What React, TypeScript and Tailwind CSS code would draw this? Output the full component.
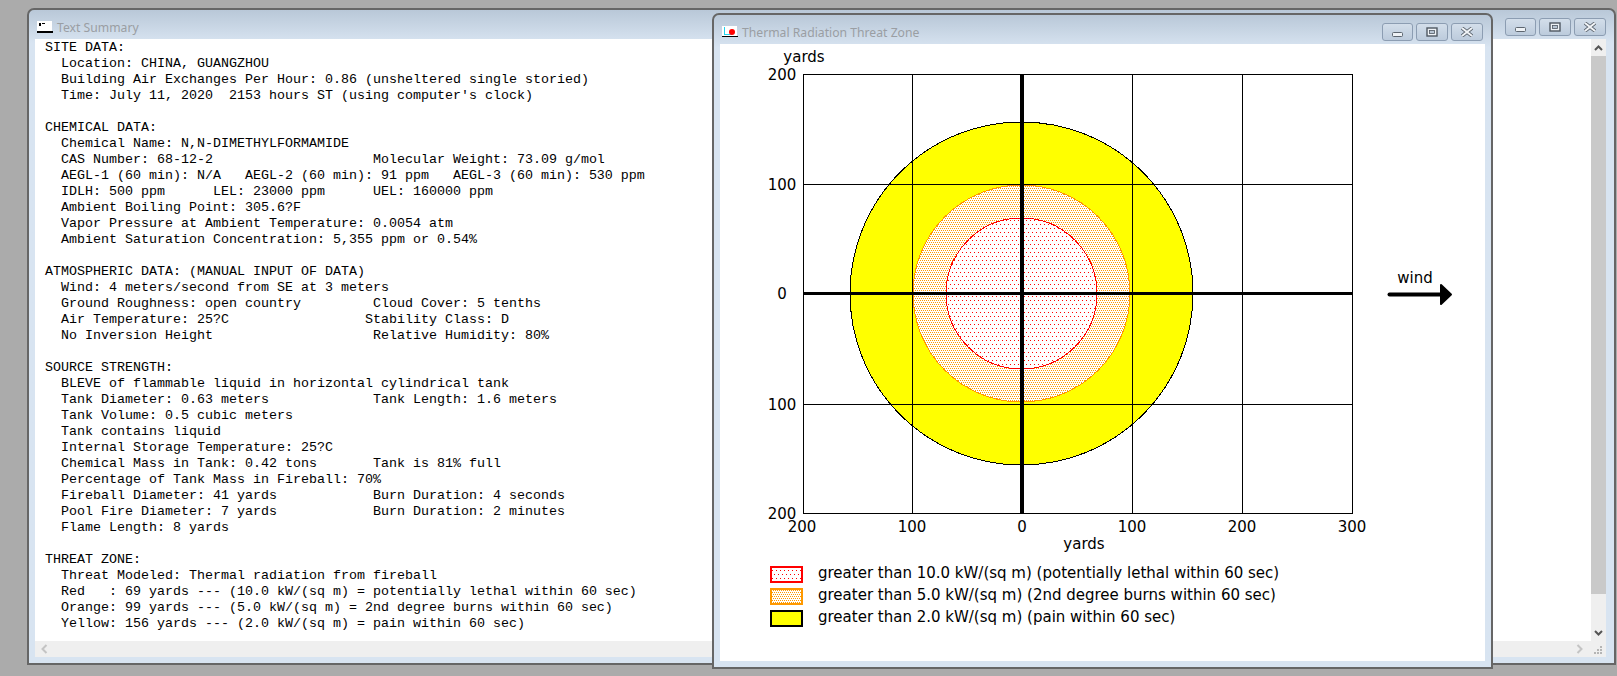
const SUMMARY = `SITE DATA:
  Location: CHINA, GUANGZHOU
  Building Air Exchanges Per Hour: 0.86 (unsheltered single storied)
  Time: July 11, 2020  2153 hours ST (using computer's clock)

CHEMICAL DATA:
  Chemical Name: N,N-DIMETHYLFORMAMIDE
  CAS Number: 68-12-2                    Molecular Weight: 73.09 g/mol
  AEGL-1 (60 min): N/A   AEGL-2 (60 min): 91 ppm   AEGL-3 (60 min): 530 ppm
  IDLH: 500 ppm      LEL: 23000 ppm      UEL: 160000 ppm
  Ambient Boiling Point: 305.6?F
  Vapor Pressure at Ambient Temperature: 0.0054 atm
  Ambient Saturation Concentration: 5,355 ppm or 0.54%

ATMOSPHERIC DATA: (MANUAL INPUT OF DATA)
  Wind: 4 meters/second from SE at 3 meters
  Ground Roughness: open country         Cloud Cover: 5 tenths
  Air Temperature: 25?C                 Stability Class: D
  No Inversion Height                    Relative Humidity: 80%

SOURCE STRENGTH:
  BLEVE of flammable liquid in horizontal cylindrical tank
  Tank Diameter: 0.63 meters             Tank Length: 1.6 meters
  Tank Volume: 0.5 cubic meters
  Tank contains liquid
  Internal Storage Temperature: 25?C
  Chemical Mass in Tank: 0.42 tons       Tank is 81% full
  Percentage of Tank Mass in Fireball: 70%
  Fireball Diameter: 41 yards            Burn Duration: 4 seconds
  Pool Fire Diameter: 7 yards            Burn Duration: 2 minutes
  Flame Length: 8 yards

THREAT ZONE:
  Threat Modeled: Thermal radiation from fireball
  Red   : 69 yards --- (10.0 kW/(sq m) = potentially lethal within 60 sec)
  Orange: 99 yards --- (5.0 kW/(sq m) = 2nd degree burns within 60 sec)
  Yellow: 156 yards --- (2.0 kW/(sq m) = pain within 60 sec)`;

const CX = 1021.5;
const CY = 293.5;
const GRID_X = [803, 912.5, 1132.5, 1242.5, 1352];
const GRID_Y = [74.5, 184.5, 404.5, 513.5];

function WindowButtons() {
  return (
    <div className="flex gap-[3px]">
      <button className="flex h-[18px] w-[31px] items-center justify-center rounded-[3px] border border-[#8c9db2] bg-gradient-to-b from-[#d3deea] to-[#bccbdc]">
        <svg width="12" height="6" className="mt-[5px]">
          <rect x="0.5" y="0.5" width="10" height="4" rx="1" fill="#eef2f6" stroke="#5d6670" />
        </svg>
      </button>
      <button className="flex h-[18px] w-[32px] items-center justify-center rounded-[3px] border border-[#8c9db2] bg-gradient-to-b from-[#d3deea] to-[#bccbdc]">
        <svg width="12" height="10">
          <rect x="1" y="1" width="10" height="8" fill="#eef2f6" stroke="#4f5862" strokeWidth="1.4" />
          <rect x="3.5" y="3.5" width="5" height="3" fill="#b9c6d4" stroke="#4f5862" strokeWidth="0.8" />
        </svg>
      </button>
      <button className="flex h-[18px] w-[32px] items-center justify-center rounded-[3px] border border-[#8c9db2] bg-gradient-to-b from-[#d3deea] to-[#bccbdc]">
        <svg width="14" height="10" viewBox="0 0 14 10">
          <path d="M2 1 L12 9 M12 1 L2 9" stroke="#59626c" strokeWidth="3.6" />
          <path d="M2 1 L12 9 M12 1 L2 9" stroke="#f1f4f7" strokeWidth="2" />
        </svg>
      </button>
    </div>
  );
}

function TitleBar({ title, icon }: { title: string; icon: React.ReactNode }) {
  return (
    <div className="flex h-[29px] items-start">
      <div className="mt-[11px] ml-[8px] flex h-[12px] w-[16px]">{icon}</div>
      <span className="mt-[9px] ml-[4px] flex-1 font-['Noto_Sans',sans-serif] text-[12.2px] leading-[18px] text-[#9a9ea3]">
        {title}
      </span>
      <div className="mt-[8px] mr-[8px]">
        <WindowButtons />
      </div>
    </div>
  );
}

function TextSummaryWindow() {
  return (
    <div className="absolute top-[8px] left-[27px] flex h-[657px] w-[1589px] flex-col rounded-t-[7px] border-2 border-[#666666] bg-gradient-to-b from-[#b9c8d8] via-[#d8e4f1] via-[5%] to-[#d8e4f1]">
      <TitleBar
        title="Text Summary"
        icon={
          <svg width="16" height="12">
            <rect width="15" height="11" fill="#fff" />
            <rect y="10" width="16" height="2" fill="#000" />
            <rect x="2" y="2" width="2" height="3" fill="#000" />
            <rect x="5" y="2" width="3" height="1" fill="#000" />
          </svg>
        }
      />
      <div className="mr-[8px] mb-[6px] ml-[6px] flex flex-1 flex-col overflow-hidden bg-white">
        <div className="flex flex-1 overflow-hidden">
          <pre className="flex-1 pt-px pl-[10px] font-['Liberation_Mono',monospace] text-[13.33px] leading-[16px] text-black">
            {SUMMARY}
          </pre>
          {/* vertical scrollbar */}
          <div className="flex w-[15px] flex-col bg-[#efefef]">
            <div className="flex h-[17px] items-center justify-center">
              <svg width="9" height="6">
                <path d="M1 5 L4.5 1.5 L8 5" fill="none" stroke="#555" strokeWidth="2" />
              </svg>
            </div>
            <div className="h-[538px] bg-[#c9c9c9]" />
            <div className="mt-auto flex h-[17px] items-center justify-center">
              <svg width="9" height="6">
                <path d="M1 1 L4.5 4.5 L8 1" fill="none" stroke="#555" strokeWidth="2" />
              </svg>
            </div>
          </div>
        </div>
        {/* horizontal scrollbar */}
        <div className="flex h-[16px] items-center justify-between bg-[#efefef] pr-[3px] pl-[6px]">
          <svg width="7" height="10">
            <path d="M5.5 1 L1.5 5 L5.5 9" fill="none" stroke="#c4c4c4" strokeWidth="2" />
          </svg>
          <div className="flex items-center gap-[11px]">
            <svg width="7" height="10">
              <path d="M1.5 1 L5.5 5 L1.5 9" fill="none" stroke="#c4c4c4" strokeWidth="2" />
            </svg>
            <svg width="9" height="9" className="mt-[2px]">
              <rect x="6" width="2" height="2" fill="#b5b5b5" />
              <rect x="3" y="3" width="2" height="2" fill="#b5b5b5" />
              <rect x="6" y="3" width="2" height="2" fill="#b5b5b5" />
              <rect y="6" width="2" height="2" fill="#b5b5b5" />
              <rect x="3" y="6" width="2" height="2" fill="#b5b5b5" />
              <rect x="6" y="6" width="2" height="2" fill="#b5b5b5" />
            </svg>
          </div>
        </div>
      </div>
    </div>
  );
}

function ThreatChart() {
  return (
    <svg
      width="765"
      height="512"
      viewBox="720 44 765 512"
      className="block font-['DejaVu_Sans',sans-serif] text-[15px]"
      shapeRendering="crispEdges"
    >
      <defs>
        <pattern id="red-dots" width="4" height="8" patternUnits="userSpaceOnUse">
          <rect width="4" height="8" fill="#fff" />
          <rect x="0" y="0" width="1" height="1" fill="#f00" />
          <rect x="2" y="4" width="1" height="1" fill="#f00" />
        </pattern>
        <pattern id="orange-dots" width="4" height="4" patternUnits="userSpaceOnUse">
          <rect width="4" height="4" fill="#fff" />
          <rect x="0" y="0" width="1" height="1" fill="#ff9900" />
          <rect x="2" y="0" width="1" height="1" fill="#ff9900" />
          <rect x="1" y="2" width="1" height="1" fill="#ff9900" />
          <rect x="3" y="2" width="1" height="1" fill="#ff9900" />
        </pattern>
      </defs>

      <rect x="803" y="74.5" width="549" height="439" fill="#fff" />
      <circle cx={CX} cy={CY} r="171.5" fill="#ffff00" stroke="#000" />
      <circle cx={CX} cy={CY} r="108.5" fill="url(#orange-dots)" stroke="#ff9900" />
      <circle cx={CX} cy={CY} r="75.5" fill="url(#red-dots)" stroke="#f00" />

      <rect x="803" y="74.5" width="549" height="439" fill="none" stroke="#000" />
      {GRID_X.map((x) => (
        <line key={x} x1={x} x2={x} y1="74.5" y2="513.5" stroke="#000" />
      ))}
      {GRID_Y.map((y) => (
        <line key={y} x1="803" x2="1352" y1={y} y2={y} stroke="#000" />
      ))}
      <rect x="1020" y="74" width="4" height="440" fill="#000" />
      <rect x="803" y="292" width="549" height="3" fill="#000" />

      <g fill="#000" textAnchor="middle" shapeRendering="auto">
        <text x="804" y="62">yards</text>
        <text x="782" y="80">200</text>
        <text x="782" y="190">100</text>
        <text x="782" y="299">0</text>
        <text x="782" y="410">100</text>
        <text x="782" y="519">200</text>
        <text x="802" y="532">200</text>
        <text x="912" y="532">100</text>
        <text x="1022" y="532">0</text>
        <text x="1132" y="532">100</text>
        <text x="1242" y="532">200</text>
        <text x="1352" y="532">300</text>
        <text x="1084" y="549">yards</text>
        <text x="1415" y="283">wind</text>
      </g>

      {/* wind arrow */}
      <g shapeRendering="auto">
        <line x1="1389.5" x2="1444" y1="294.5" y2="294.5" stroke="#000" strokeWidth="4" strokeLinecap="round" />
        <path d="M1441 285 L1451 294.5 L1441 304 Z" fill="#000" stroke="#000" strokeWidth="2" strokeLinejoin="round" />
      </g>
    </svg>
  );
}

function LegendRow({ fill, border, label }: { fill: string; border: string; label: string }) {
  return (
    <div className="flex h-[17px] items-center gap-[15px]">
      <svg width="33" height="17" className="shrink-0" shapeRendering="crispEdges">
        <rect x="1" y="1" width="31" height="15" fill={fill} stroke={border} strokeWidth="1.6" />
      </svg>
      <span className="-mt-[3px] font-['DejaVu_Sans',sans-serif] text-[15px] leading-[17px] text-black">{label}</span>
    </div>
  );
}

function ThreatZoneWindow() {
  return (
    <div className="absolute top-[13px] left-[712px] flex h-[656px] w-[781px] flex-col rounded-t-[7px] border-2 border-[#666666] bg-gradient-to-b from-[#b9c8d8] via-[#d8e4f1] via-[5%] to-[#d8e4f1]">
      <TitleBar
        title="Thermal Radiation Threat Zone"
        icon={
          <svg width="16" height="12">
            <rect width="15" height="10" fill="#fff" />
            <rect x="2" y="1" width="1" height="8" fill="#22d3ee" />
            <rect x="2" y="8" width="8" height="1" fill="#22d3ee" />
            <circle cx="10" cy="6" r="3" fill="#f00" />
            <rect y="10" width="16" height="1" fill="#000" />
          </svg>
        }
      />
      <div className="mr-[6px] mb-[6px] ml-[6px] flex-1 bg-white">
        <ThreatChart />
        <div className="mt-[10px] ml-[50px] flex flex-col gap-[5px]">
          <LegendRow
            fill="url(#red-dots)"
            border="#f00"
            label="greater than 10.0 kW/(sq m) (potentially lethal within 60 sec)"
          />
          <LegendRow
            fill="url(#orange-dots)"
            border="#ff9900"
            label="greater than 5.0 kW/(sq m) (2nd degree burns within 60 sec)"
          />
          <LegendRow fill="#ffff00" border="#000" label="greater than 2.0 kW/(sq m) (pain within 60 sec)" />
        </div>
      </div>
    </div>
  );
}

export default function App() {
  return (
    <div className="relative h-[676px] w-[1617px] overflow-hidden bg-[#ababab]">
      <TextSummaryWindow />
      <ThreatZoneWindow />
    </div>
  );
}
